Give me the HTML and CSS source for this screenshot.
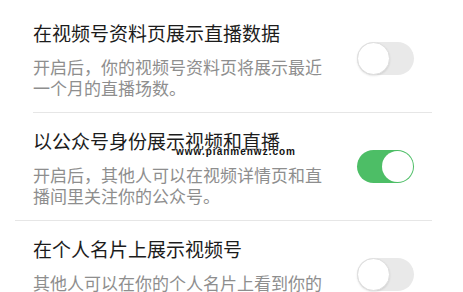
FILE: index.html
```html
<!DOCTYPE html>
<html lang="zh-CN">
<head>
<meta charset="utf-8">
<link rel="stylesheet" href="styles.css">
</head>
<body>
<div class="list">
  <div class="item">
    <div class="text">
      <div class="title">在视频号资料页展示直播数据</div>
      <div class="desc">开启后，你的视频号资料页将展示最近一个月的直播场数。</div>
    </div>
    <div class="switch"><span class="knob"></span></div>
  </div>
  <div class="divider"></div>
  <div class="item">
    <div class="text">
      <div class="title">以公众号身份展示视频和直播</div>
      <div class="desc">开启后，其他人可以在视频详情页和直播间里关注你的公众号。</div>
    </div>
    <div class="switch on"><span class="knob"></span></div>
    <span class="watermark">www.pianmenwz.com</span>
  </div>
  <div class="divider wide"></div>
  <div class="item">
    <div class="text">
      <div class="title">在个人名片上展示视频号</div>
      <div class="desc">其他人可以在你的个人名片上看到你的视频号和视频号的直播。</div>
    </div>
    <div class="switch"><span class="knob"></span></div>
  </div>
</div>
</body>
</html>
```

FILE: styles.css
```css
html, body {
  margin: 0;
  padding: 0;
  background: #ffffff;
  overflow: hidden;
}
body {
  font-family: "Noto Sans CJK SC", "Noto Sans", sans-serif;
  width: 463px;
  height: 292px;
}
.list {
  padding-top: 5px;
}
.item {
  position: relative;
  display: flex;
  align-items: center;
  justify-content: space-between;
  height: 107px;
  box-sizing: border-box;
  padding: 0 49px 0 33px;
}
.text {
  width: 292px;
  padding-top: 1px;
}
.title {
  font-size: 19px;
  line-height: 26px;
  color: #1c1c1c;
  margin-bottom: 10px;
  white-space: nowrap;
}
.desc {
  font-size: 17px;
  line-height: 21px;
  color: #8e8e8e;
}
.divider {
  height: 1px;
  background: #e6e6e6;
  margin: 0 31px 0 33px;
}
.divider.wide {
  margin-left: 15px;
}
.switch {
  width: 57px;
  height: 33px;
  border-radius: 17px;
  background: #e9e9e9;
  position: relative;
  flex: none;
  box-sizing: border-box;
}
.knob {
  position: absolute;
  left: 0;
  top: 0;
  width: 33px;
  height: 33px;
  border-radius: 50%;
  background: #ffffff;
  box-sizing: border-box;
  border: 1px solid #dedede;
  box-shadow: 0 1px 2px rgba(0,0,0,0.10);
}
.switch.on {
  background: #4dbe66;
}
.switch.on .knob {
  left: auto;
  right: 1px;
  top: 1px;
  width: 31px;
  height: 31px;
  border: none;
  box-shadow: none;
}
.watermark {
  position: absolute;
  left: 176px;
  top: 33px;
  font-family: "Liberation Sans", Arial, sans-serif;
  font-weight: bold;
  font-size: 10px;
  line-height: 12px;
  color: #111111;
  letter-spacing: 1px;
  text-shadow: 0 0 2px #ffffff, 0 0 2px #ffffff;
}
```
